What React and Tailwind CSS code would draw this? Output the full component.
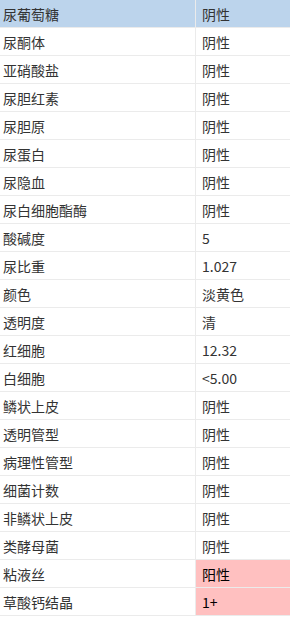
import React from 'react';

const rows = [
  ['尿葡萄糖', '阴性'],
  ['尿酮体', '阴性'],
  ['亚硝酸盐', '阴性'],
  ['尿胆红素', '阴性'],
  ['尿胆原', '阴性'],
  ['尿蛋白', '阴性'],
  ['尿隐血', '阴性'],
  ['尿白细胞酯酶', '阴性'],
  ['酸碱度', '5'],
  ['尿比重', '1.027'],
  ['颜色', '淡黄色'],
  ['透明度', '清'],
  ['红细胞', '12.32'],
  ['白细胞', '<5.00'],
  ['鳞状上皮', '阴性'],
  ['透明管型', '阴性'],
  ['病理性管型', '阴性'],
  ['细菌计数', '阴性'],
  ['非鳞状上皮', '阴性'],
  ['类酵母菌', '阴性'],
  ['粘液丝', '阳性', true],
  ['草酸钙结晶', '1+', true],
];

const App = () => {
  return (
    <div
      className="w-[290px] h-[620px] bg-white text-[14px] text-[#333]"
      style={{ fontFamily: '"Noto Sans CJK SC", "Noto Sans", sans-serif' }}
    >
      {rows.map(([name, value, abnormal], i) => (
        <div
          key={name}
          className={`flex h-[28px] border-b border-[#ebebeb] ${i === 0 ? 'bg-[#bcd4ec]' : ''}`}
        >
          <div className="w-[196px] flex items-center pl-[3px] border-r border-[#ebebeb] leading-none">
            {name}
          </div>
          <div
            className={`flex-1 flex items-center pl-[6px] leading-none ${abnormal ? 'bg-[#ffc0c0] text-black' : ''}`}
          >
            {value}
          </div>
        </div>
      ))}
    </div>
  );
};

export default App;
